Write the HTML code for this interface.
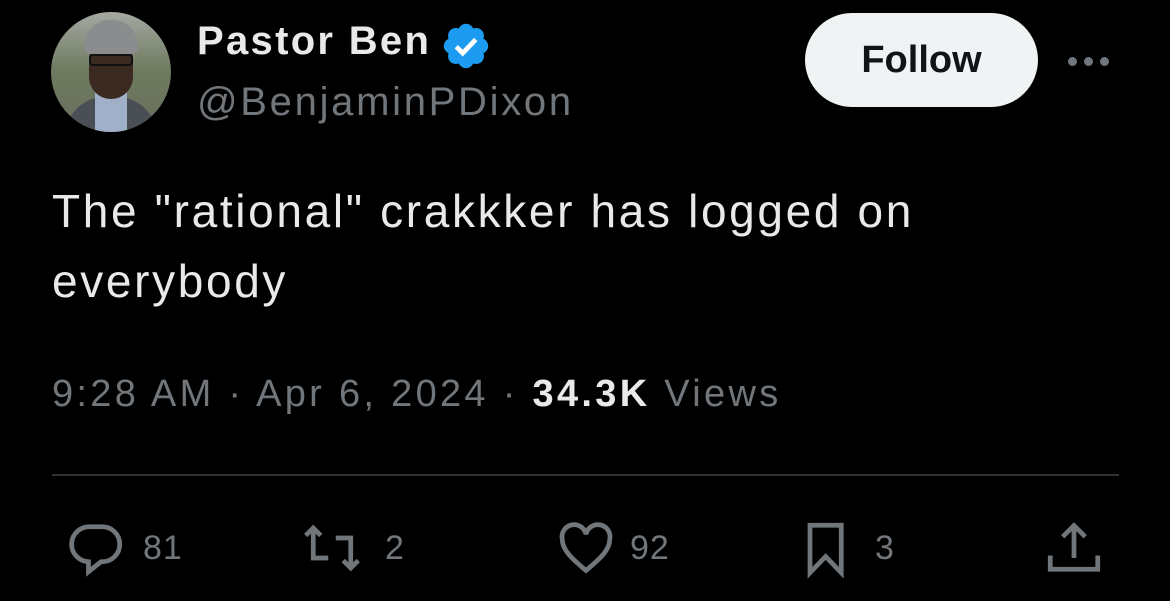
<!DOCTYPE html>
<html><head><style>
body{margin:0;width:1170px;height:601px;background:#000;overflow:hidden;font-family:"Liberation Sans",Arial,sans-serif;position:relative}
.a{position:absolute;white-space:nowrap}
.g{color:#71767b}
</style></head><body>
<div class="a" style="left:51px;top:12px;width:120px;height:120px;border-radius:50%;overflow:hidden;background:linear-gradient(#a4a8a2,#6d7a5e 50%,#6a6f60)">
 <div style="position:absolute;left:14px;top:85px;width:92px;height:50px;border-radius:40px 40px 0 0;background:#4a4f55"></div>
 <div style="position:absolute;left:44px;top:80px;width:32px;height:40px;background:#9fb0c8"></div>
 <div style="position:absolute;left:38px;top:25px;width:44px;height:62px;border-radius:22px;background:#3a2a22"></div>
 <div style="position:absolute;left:33px;top:8px;width:54px;height:34px;border-radius:26px 26px 6px 6px;background:#8a8c8e"></div>
 <div style="position:absolute;left:38px;top:42px;width:44px;height:12px;border:2px solid #111;border-radius:4px;box-sizing:border-box"></div>
</div>
<div class="a" style="left:197px;top:19px;font-size:40px;font-weight:bold;color:#e7e9ea;letter-spacing:2.3px">Pastor Ben</div>
<svg class="a" style="left:440px;top:20px" width="52" height="52" viewBox="0 0 24 24"><path fill="#1d9bf0" d="M22.25 12c0-1.43-.88-2.670-2.19-3.34.46-1.39.2-2.9-.81-3.910s-2.52-1.27-3.910-.81c-.66-1.31-1.910-2.19-3.340-2.19s-2.67.88-3.33 2.19c-1.4-.46-2.91-.2-3.92.81s-1.26 2.52-.8 3.91c-1.31.67-2.2 1.91-2.2 3.34s.89 2.67 2.2 3.34c-.46 1.39-.21 2.9.8 3.91s2.52 1.26 3.91.81c.67 1.31 1.91 2.19 3.34 2.19s2.68-.88 3.34-2.19c1.39.45 2.9.2 3.91-.81s1.27-2.52.81-3.91c1.31-.67 2.19-1.91 2.19-3.34z"/><path d="M7.5 12.3l3 3 6-6.3" stroke="#fff" stroke-width="2.2" fill="none"/></svg>
<div class="a g" style="left:197px;top:80px;font-size:40px;letter-spacing:2.7px">@BenjaminPDixon</div>
<div class="a" style="left:805px;top:13px;width:233px;height:94px;border-radius:47px;background:#eff3f4;color:#0f1419;font-size:38px;font-weight:bold;text-align:center;line-height:94px">Follow</div>
<div class="a" style="left:1068px;top:57px">
 <span style="position:absolute;left:0;width:9px;height:9px;border-radius:50%;background:#71767b"></span>
 <span style="position:absolute;left:16px;width:9px;height:9px;border-radius:50%;background:#71767b"></span>
 <span style="position:absolute;left:32px;width:9px;height:9px;border-radius:50%;background:#71767b"></span>
</div>
<div class="a" style="left:52px;top:176px;font-size:46px;color:#e7e9ea;line-height:70px;letter-spacing:2.65px">The "rational" crakkker has logged on<br>everybody</div>
<div class="a g" style="left:52px;top:373px;font-size:38px;letter-spacing:3.3px">9:28 AM · Apr 6, 2024 · <b style="color:#e7e9ea">34.3K</b> Views</div>
<div class="a" style="left:52px;top:474px;width:1067px;height:2px;background:#2f3336"></div>
<svg class="a" style="left:66px;top:518px" width="60" height="60" viewBox="0 0 24 24" fill="none" stroke="#71767b" stroke-width="1.9"><path d="M9.5 3.5h5a7 7 0 0 1 0 14h-.5l-5 4v-4a7 7 0 0 1 .5-14z"/></svg>
<div class="a g" style="left:143px;top:529px;font-size:34px;letter-spacing:1px">81</div>
<svg class="a" style="left:302px;top:518px" width="60" height="60" viewBox="0 0 24 24" fill="none" stroke="#71767b" stroke-width="1.9"><path d="M4.5 4v12h6M1.5 7l3-3 3 3M19.5 20V8h-6M16.5 17l3 3 3-3"/></svg>
<div class="a g" style="left:385px;top:529px;font-size:34px">2</div>
<svg class="a" style="left:555px;top:518px" width="62" height="60" viewBox="0 0 24 24" fill="none" stroke="#71767b" stroke-width="1.9"><path d="M12 21C8 17.5 2.5 13.5 2.5 8.5A4.8 4.8 0 0 1 12 6.5a4.8 4.8 0 0 1 9.5 2C21.5 13.5 16 17.5 12 21z"/></svg>
<div class="a g" style="left:630px;top:529px;font-size:34px;letter-spacing:1px">92</div>
<svg class="a" style="left:800px;top:518px" width="60" height="62" viewBox="0 0 24 24" fill="none" stroke="#71767b" stroke-width="1.9"><path d="M4 2.5h12.5v19L10.25 15 4 21.5z"/></svg>
<div class="a g" style="left:875px;top:529px;font-size:34px">3</div>
<svg class="a" style="left:1044px;top:518px" width="60" height="60" viewBox="0 0 24 24" fill="none" stroke="#71767b" stroke-width="1.9"><path d="M12 3v13M7.5 7.5 12 3l4.5 4.5M2.5 15v5.5h19V15"/></svg>
</body></html>
